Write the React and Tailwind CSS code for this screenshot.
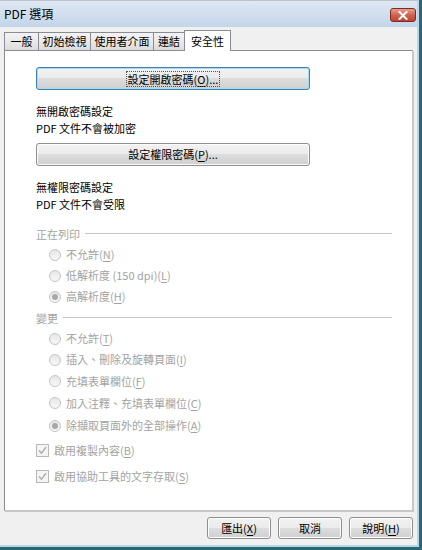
import React from "react";

const F = "font-['Noto_Sans_CJK_TC','Noto_Sans_CJK_JP',sans-serif]";

function U({ children }) {
  return <span className="underline underline-offset-2">{children}</span>;
}

function Btn({ children, focused, className = "" }) {
  return (
    <div
      className={
        "flex items-center justify-center rounded-[3px] border text-[11px] text-black " +
        (focused
          ? "border-[#3c7fb1] shadow-[inset_0_0_0_1px_#a6dcf5] "
          : "border-[#8e8f8f] shadow-[inset_0_0_0_1px_#fcfcfc] ") +
        "bg-[linear-gradient(#f2f2f2_0%,#ebebeb_48%,#dddddd_50%,#cfcfcf_100%)] " +
        className
      }
    >
      {children}
    </div>
  );
}

function Radio({ checked }) {
  return (
    <div className="w-[12px] h-[12px] rounded-full border border-[#c4c4c4] bg-[linear-gradient(#e6e6e6,#f8f8f8)] flex items-center justify-center shrink-0">
      {checked && <div className="w-[6px] h-[6px] rounded-full bg-[#a8a8a8]" />}
    </div>
  );
}

function RadioRow({ h, checked, children }) {
  return (
    <div className={"flex items-center pl-[13px] gap-[5px] " + h}>
      <Radio checked={checked} />
      <span>{children}</span>
    </div>
  );
}

function Check({ h, children }) {
  return (
    <div className={"flex items-center gap-[5px] " + h}>
      <div className="w-[13px] h-[13px] border border-[#b8b8b8] bg-[#f4f4f4] flex items-center justify-center shrink-0">
        <svg width="9" height="9" viewBox="0 0 9 9">
          <path d="M1 4.5 L3.5 7.2 L8 1.2" fill="none" stroke="#a9a9a9" strokeWidth="1.4" />
        </svg>
      </div>
      <span>{children}</span>
    </div>
  );
}

function Sep({ label }) {
  return (
    <div className="flex items-center gap-[5px] h-[20px] pr-[20px] text-[#a3a3a3]">
      <span>{label}</span>
      <div className="flex-1 h-[2px] border-t border-[#c5c5c5] border-b-white border-b" />
    </div>
  );
}

function Tab({ w, selected, children }) {
  if (selected) {
    return (
      <div
        className={
          "h-[21px] border border-b-0 border-[#898c95] bg-white flex items-center justify-center text-[11px] -mb-px relative z-10 " +
          w
        }
      >
        {children}
      </div>
    );
  }
  return (
    <div
      className={
        "h-[18px] border border-b-0 border-[#898c95] bg-[linear-gradient(#f3f3f3,#e9e9e9_50%,#dcdcdc)] flex items-center justify-center text-[11px] text-black -ml-px first:ml-0 " +
        w
      }
    >
      {children}
    </div>
  );
}

export default function App() {
  return (
    <div className={"w-[422px] h-[550px] border-r-[3px] border-b-[3px] border-[#2c6776] " + F}>
      <div className="w-full h-full border-r-[2px] border-b-[2px] border-[#b4d8ea] bg-[#f0f0f0] flex flex-col">
        {/* title bar */}
        <div className="h-[27px] border-t border-[#b9c2cc] bg-[linear-gradient(#dfe8f3,#c4d5ea)] flex items-center justify-between pl-[4px] pr-[1px]">
          <span className="text-[12px] text-black">PDF 選項</span>
          <div className="w-[26px] h-[14px] rounded-[3px] border border-[#7e2a22] bg-[linear-gradient(#e8a192,#d1634f_50%,#c04330)] flex items-center justify-center mt-[2px]">
            <svg width="10" height="9" viewBox="0 0 10 9">
              <path d="M1.5 1 L8.5 8 M8.5 1 L1.5 8" stroke="#ffffff" strokeWidth="2" strokeLinecap="square" />
            </svg>
          </div>
        </div>

        {/* tabs */}
        <div className="flex items-end pl-[4px] mt-[2px] h-[21px]">
          <Tab w="w-[35px]">一般</Tab>
          <Tab w="w-[53px]">初始檢視</Tab>
          <Tab w="w-[64px]">使用者介面</Tab>
          <Tab w="w-[32px]">連結</Tab>
          <div className="-ml-px">
            <Tab w="w-[47px]" selected>
              安全性
            </Tab>
          </div>
        </div>

        {/* panel */}
        <div className="mx-[4px] h-[461px] bg-white border border-[#898c95] border-r-[#c8c8c8] border-b-[#c8c8c8] shadow-[1px_1px_0_#c8c8c8] pl-[31px] text-[11px] text-black flex flex-col">
          <Btn focused className="mt-[16px] w-[274px] h-[23px]">
            <span className="outline outline-1 outline-dotted outline-[#555] px-[1px] leading-[14px]">
              設定開啟密碼(<U>O</U>)...
            </span>
          </Btn>
          <div className="mt-[13px] h-[17px] flex items-center">無開啟密碼設定</div>
          <div className="h-[17px] flex items-center">PDF 文件不會被加密</div>
          <Btn className="mt-[6px] w-[274px] h-[23px]">
            設定權限密碼(<U>P</U>)...
          </Btn>
          <div className="mt-[13px] h-[17px] flex items-center">無權限密碼設定</div>
          <div className="h-[17px] flex items-center">PDF 文件不會受限</div>

          <div className="mt-[11px] text-[#a3a3a3]">
            <Sep label="正在列印" />
            <RadioRow h="h-[21px]">
              不允許(<U>N</U>)
            </RadioRow>
            <RadioRow h="h-[21px]">
              低解析度 (150 dpi)(<U>L</U>)
            </RadioRow>
            <RadioRow h="h-[21px]" checked>
              高解析度(<U>H</U>)
            </RadioRow>
            <div className="h-px" />
            <Sep label="變更" />
            <RadioRow h="h-[21px]">
              不允許(<U>T</U>)
            </RadioRow>
            <RadioRow h="h-[21px]">
              插入、刪除及旋轉頁面(<U>I</U>)
            </RadioRow>
            <RadioRow h="h-[22px]">
              充填表單欄位(<U>F</U>)
            </RadioRow>
            <RadioRow h="h-[22px]">
              加入注釋、充填表單欄位(<U>C</U>)
            </RadioRow>
            <RadioRow h="h-[23px]" checked>
              除擷取頁面外的全部操作(<U>A</U>)
            </RadioRow>
            <Check h="h-[26px]">
              啟用複製內容(<U>B</U>)
            </Check>
            <Check h="h-[26px]">
              啟用協助工具的文字存取(<U>S</U>)
            </Check>
          </div>
        </div>

        {/* bottom buttons */}
        <div className="flex justify-end gap-[7px] pr-[4px] mt-[6px]">
          <Btn className="w-[64px] h-[22px]">
            匯出(<U>X</U>)
          </Btn>
          <Btn className="w-[64px] h-[22px]">取消</Btn>
          <Btn className="w-[64px] h-[22px]">
            說明(<U>H</U>)
          </Btn>
        </div>
      </div>
    </div>
  );
}
